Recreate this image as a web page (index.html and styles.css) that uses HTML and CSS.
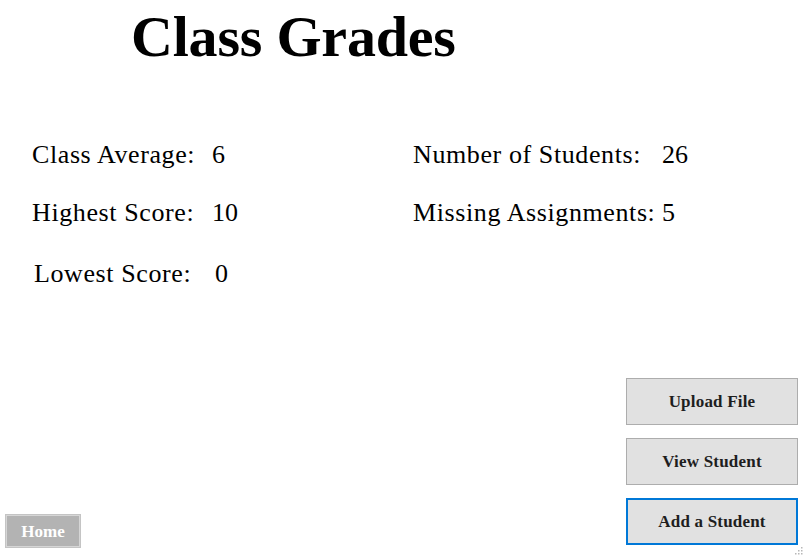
FILE: index.html
```html
<!DOCTYPE html>
<html>
<head>
<meta charset="utf-8">
<title>Class Grades</title>
<link rel="stylesheet" href="styles.css">
</head>
<body>
<div class="page">
  <h1 class="title">Class Grades</h1>
  <div class="stats">
    <div class="col col-left">
      <div class="label">Class Average:</div><div class="value">6</div>
      <div class="label">Highest Score:</div><div class="value">10</div>
      <div class="label low">Lowest Score:</div><div class="value low low-val">0</div>
    </div>
    <div class="col col-right">
      <div class="label">Number of Students:</div><div class="value">26</div>
      <div class="label">Missing Assignments:</div><div class="value">5</div>
    </div>
  </div>
  <div class="bottom">
    <button class="home-btn">Home</button>
    <div class="actions">
      <button class="btn">Upload File</button>
      <button class="btn">View Student</button>
      <button class="btn btn-focus">Add a Student</button>
    </div>
  </div>
  <svg class="grip" width="10" height="10" viewBox="0 0 10 10">
    <rect x="8" y="2" width="1.5" height="1.5" fill="#b8b8b8"/>
    <rect x="5" y="5" width="1.5" height="1.5" fill="#b8b8b8"/>
    <rect x="8" y="5" width="1.5" height="1.5" fill="#b8b8b8"/>
    <rect x="2" y="8" width="1.5" height="1.5" fill="#b8b8b8"/>
    <rect x="5" y="8" width="1.5" height="1.5" fill="#b8b8b8"/>
    <rect x="8" y="8" width="1.5" height="1.5" fill="#b8b8b8"/>
  </svg>
</div>
</body>
</html>
```

FILE: styles.css
```css
html, body {
  margin: 0;
  padding: 0;
  background: #ffffff;
}

body {
  width: 806px;
  height: 557px;
  overflow: hidden;
  font-family: "Liberation Serif", "Times New Roman", serif;
  color: #000;
}

.page {
  position: relative;
  display: flex;
  flex-direction: column;
  height: 557px;
}

.title {
  margin: 0;
  padding: 4px 0 0 131px;
  font-size: 58px;
  line-height: 66px;
  font-weight: bold;
  letter-spacing: -0.2px;
}

.stats {
  display: flex;
  margin-top: 70px;
  padding-left: 32px;
}

.col {
  display: grid;
  row-gap: 28px;
  align-content: start;
  font-size: 26px;
  line-height: 30px;
}

.label {
  letter-spacing: 0.6px;
  white-space: nowrap;
}

.col-left {
  grid-template-columns: 180px auto;
  width: 381px;
}

.col-right {
  grid-template-columns: 249px auto;
}

.low {
  margin-top: 3px;
}

.label.low {
  padding-left: 2px;
}

.low-val {
  padding-left: 3px;
}

.bottom {
  margin-top: auto;
  display: flex;
  justify-content: space-between;
  align-items: flex-end;
  padding: 0 8px 9px 5px;
}

.home-btn {
  width: 76px;
  height: 34px;
  margin: 0;
  padding: 2px 0 0;
  background: #b3b3b3;
  border: 2px solid #d6d6d6;
  outline: 1px solid #c4c4c4;
  outline-offset: -1px;
  color: #ffffff;
  font-family: "Liberation Serif", "Times New Roman", serif;
  font-weight: bold;
  font-size: 17px;
}

.actions {
  display: flex;
  flex-direction: column;
  gap: 13px;
  margin-bottom: 3px;
}

.btn {
  width: 172px;
  height: 47px;
  margin: 0;
  padding: 0;
  background: #e1e1e1;
  border: 1px solid #adadad;
  color: #1e1e1e;
  font-family: "Liberation Serif", "Times New Roman", serif;
  font-weight: bold;
  font-size: 17px;
  letter-spacing: 0.2px;
}

.btn-focus {
  border: 2px solid #0078d7;
}

.grip {
  position: absolute;
  right: 3px;
  bottom: 2px;
}
```
